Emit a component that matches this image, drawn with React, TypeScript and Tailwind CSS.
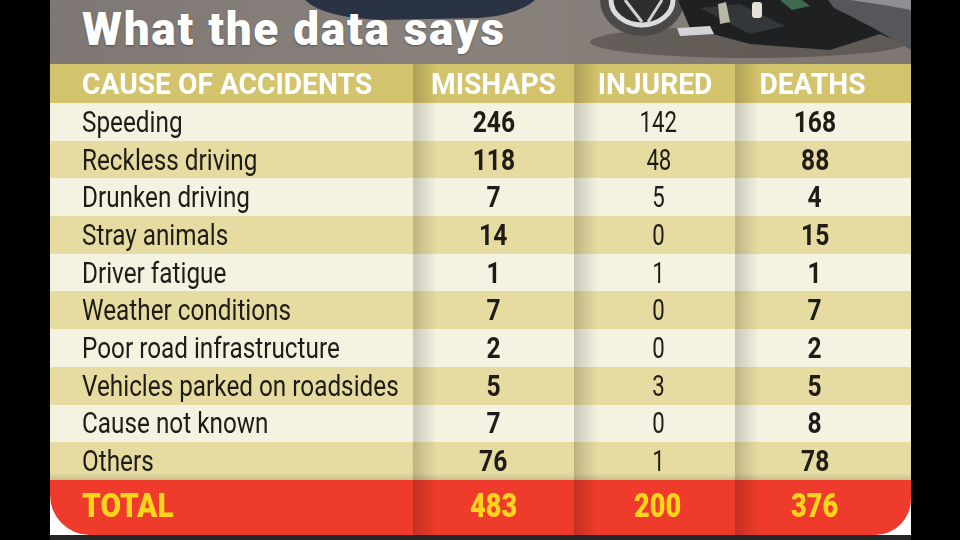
import type { ReactNode } from "react";

type Entry = [string, number, number, number];

const entries: Entry[] = [
  ["Speeding", 246, 142, 168],
  ["Reckless driving", 118, 48, 88],
  ["Drunken driving", 7, 5, 4],
  ["Stray animals", 14, 0, 15],
  ["Driver fatigue", 1, 1, 1],
  ["Weather conditions", 7, 0, 7],
  ["Poor road infrastructure", 2, 0, 2],
  ["Vehicles parked on roadsides", 5, 3, 5],
  ["Cause not known", 7, 0, 8],
  ["Others", 76, 1, 78],
];

const shade =
  "bg-[linear-gradient(to_right,rgba(0,0,0,0.18),rgba(0,0,0,0)_24px)]";

function RoadPhoto() {
  return (
    <svg
      className="absolute inset-0 h-full w-full"
      viewBox="0 0 861 64"
      preserveAspectRatio="none"
      aria-hidden="true"
    >
      <defs>
        <filter id="grain" x="0" y="0" width="100%" height="100%">
          <feTurbulence type="fractalNoise" baseFrequency="0.85" numOctaves="2" seed="7" />
          <feColorMatrix
            type="matrix"
            values="0 0 0 0 0.22  0 0 0 0 0.2  0 0 0 0 0.19  0 0 0 1.8 -0.8"
          />
        </filter>
        <linearGradient id="road" x1="0" y1="0" x2="1" y2="0">
          <stop offset="0" stopColor="#7e7773" />
          <stop offset="0.5" stopColor="#8a837d" />
          <stop offset="1" stopColor="#7d7671" />
        </linearGradient>
      </defs>
      <rect width="861" height="64" fill="url(#road)" />
      <rect width="861" height="64" filter="url(#grain)" opacity="0.6" />
      <path d="M255 0 Q272 17 330 20 L430 18 Q470 14 485 0 Z" fill="#2a3343" />
      <ellipse cx="700" cy="42" rx="160" ry="16" fill="#3c3733" opacity="0.45" />
      <ellipse cx="592" cy="0" rx="42" ry="36" fill="#4b4a48" />
      <ellipse cx="592" cy="0" rx="31" ry="25" fill="#2e2e2e" stroke="#dcdcda" strokeWidth="5" />
      <path d="M575 0 L592 22 M612 0 L598 22" stroke="#cfcfcd" strokeWidth="3" />
      <path
        d="M628 0 L640 28 L700 44 L780 50 L830 34 L861 46 L861 0 Z"
        fill="#1f2022"
      />
      <path d="M650 8 L700 34 L735 26 L690 4 Z" fill="#33373a" />
      <path d="M627 28 L660 26 L664 34 L630 36 Z" fill="#d4d3d8" />
      <path d="M668 4 L676 2 L680 22 L670 24 Z" fill="#b7b8a6" />
      <rect x="702" y="2" width="10" height="16" rx="3" fill="#e6e0d6" />
      <path d="M730 0 L742 10 L760 6 L752 0 Z" fill="#3f6a4f" />
      <path d="M778 0 L861 0 L861 50 Q822 26 784 8 Z" fill="#55575a" />
      <path d="M800 0 L861 0 L861 10 Q830 4 800 0 Z" fill="#8d8f92" />
    </svg>
  );
}

function Cell({
  children,
  bg,
  first,
  className,
}: {
  children: ReactNode;
  bg: string;
  first?: boolean;
  className?: string;
}) {
  return (
    <div
      className={`${bg} ${first ? "justify-start pl-8" : `justify-center ${shade}`} flex items-center ${className ?? ""}`}
    >
      {children}
    </div>
  );
}

export default function App() {
  return (
    <div className="flex h-[540px] w-[960px] bg-black pl-[50px] font-['Roboto',sans-serif]">
      <div className="flex w-[861px] flex-col bg-white">
        <div className="relative h-[64px] overflow-hidden">
          <RoadPhoto />
          <h1 className="relative whitespace-nowrap pt-[6px] pl-8 text-[46px] leading-none font-black tracking-[1.7px] text-white [text-shadow:0_1px_2px_rgba(0,0,0,0.35)]">
            What the data says
          </h1>
        </div>

        <div className="grid grid-cols-[363px_161px_161px_176px]">
          {["CAUSE OF ACCIDENTS", "MISHAPS", "INJURED", "DEATHS"].map((h, idx) => (
            <Cell
              key={h}
              bg="bg-[#d3c36c]"
              first={idx === 0}
              className={`h-[39px] ${idx === 2 ? "pl-[2px]" : ""} ${idx === 3 ? "pr-[22px]" : ""}`}
            >
              <span
                className={`inline-block whitespace-nowrap text-[30px] leading-none font-bold text-white ${idx === 0 ? "origin-left scale-x-[0.94]" : "scale-x-[0.94]"}`}
              >
                {h}
              </span>
            </Cell>
          ))}

          {entries.map(([label, mishaps, injured, deaths], n) => {
            const bg = n % 2 === 0 ? "bg-[#f4f3e2]" : "bg-[#e6dca2]";
            const last = n === entries.length - 1;
            const h = `h-[37.7px] ${last ? "shadow-[inset_0_-6px_6px_-4px_rgba(0,0,0,0.18)]" : ""}`;
            return [
              <Cell key={`${label}-c`} bg={bg} first className={h}>
                <span className="inline-block origin-left scale-x-[0.81] whitespace-nowrap text-[30px] leading-none text-[#1f1b16]">
                  {label}
                </span>
              </Cell>,
              <Cell key={`${label}-m`} bg={bg} className={h}>
                <span className="inline-block scale-x-[0.82] text-[30px] leading-none font-bold text-[#1f1b16]">
                  {mishaps}
                </span>
              </Cell>,
              <Cell key={`${label}-i`} bg={bg} className={`${h} pl-[8px]`}>
                <span className="inline-block scale-x-[0.74] text-[30px] leading-none text-[#1f1b16]">
                  {injured}
                </span>
              </Cell>,
              <Cell key={`${label}-d`} bg={bg} className={`${h} pr-[16px]`}>
                <span className="inline-block scale-x-[0.82] text-[30px] leading-none font-bold text-[#1f1b16]">
                  {deaths}
                </span>
              </Cell>,
            ];
          })}

          {["TOTAL", "483", "200", "376"].map((t, idx) => (
            <Cell
              key={t}
              bg="bg-[#ee3b2b]"
              first={idx === 0}
              className={`h-[55px] !items-start pt-[8px] ${idx === 0 ? "rounded-bl-[40px]" : ""} ${idx === 3 ? "rounded-br-[36px] pr-[16px]" : ""} ${idx === 2 ? "pl-[6px]" : ""}`}
            >
              <span
                className={`inline-block whitespace-nowrap text-[34px] leading-none font-black text-[#ffd51c] ${idx === 0 ? "origin-left scale-x-[0.88]" : "scale-x-[0.8]"}`}
              >
                {t}
              </span>
            </Cell>
          ))}
        </div>

        <div className="h-[5px] bg-[#262626]" />
      </div>
    </div>
  );
}
